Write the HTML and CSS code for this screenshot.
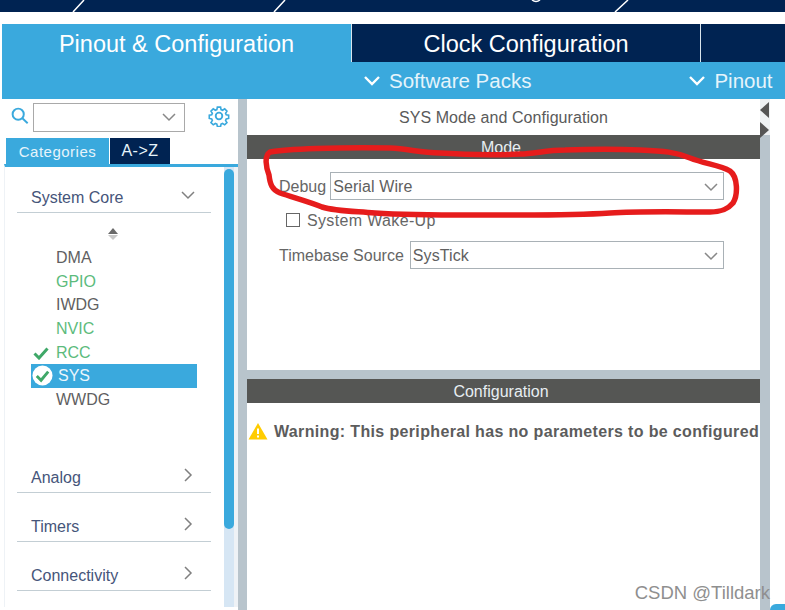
FILE: index.html
```html
<!DOCTYPE html>
<html lang="en">
<head>
    <meta charset="UTF-8">
    <title>Pinout &amp; Configuration</title>
    <link rel="stylesheet" href="styles.css">
</head>
<body>

    <!-- Cropped toolbar at the top -->
    <div class="top-strip">
        <svg width="785" height="12" viewBox="0 0 785 12">
            <path d="M73 12 L84 0 M274 12 L285 0 M615 12 L628 0" stroke="#fff" stroke-width="1.5" fill="none"/>
            <path d="M532 0 q4 3 8 0" stroke="#fff" stroke-width="1.5" fill="none"/>
        </svg>
    </div>

    <div class="tabs">
        <div class="tab tab-active">Pinout &amp; Configuration</div>
        <div class="tab tab-clock">Clock Configuration</div>
        <div class="tab tab-rest"></div>
    </div>

    <div class="subbar">
        <div class="subbar-item item-packs">
            <svg class="sub-chevron" viewBox="0 0 18 12"><path d="M2 2 L9 9 L16 2" /></svg>
            Software Packs
        </div>
        <div class="subbar-item item-pinout">
            <svg class="sub-chevron" viewBox="0 0 18 12"><path d="M2 2 L9 9 L16 2" /></svg>
            Pinout
        </div>
    </div>

    <div class="workspace">

        <!-- Left side: categories -->
        <div class="sidebar">
            <div class="search-row">
                <svg class="search-icon" viewBox="0 0 20 20"><circle cx="8" cy="8" r="6.2"/><path d="M12.6 12.6 L18.5 18"/></svg>
                <div class="search-box">
                    <svg class="select-chevron" viewBox="0 0 14 9"><path d="M1 1 L7 7 L13 1"/></svg>
                </div>
                <svg class="gear-icon" viewBox="0 0 24 24">
                    <path d="M10 2 h4 l.6 3 1.9.8 2.6-1.7 2.8 2.8-1.7 2.6.8 1.9 3 .6 v4 l-3 .6-.8 1.9 1.7 2.6-2.8 2.8-2.6-1.7-1.9.8-.6 3 h-4 l-.6-3-1.9-.8-2.6 1.7-2.8-2.8 1.7-2.6-.8-1.9-3-.6 v-4 l3-.6.8-1.9-1.7-2.6 2.8-2.8 2.6 1.7 1.9-.8 z" transform="translate(1.4 .6) scale(.88)"/>
                    <circle cx="12" cy="12" r="3.6"/>
                </svg>
            </div>

            <div class="side-tabs">
                <div class="side-tab side-tab-active">Categories</div>
                <div class="side-tab side-tab-az">A-&gt;Z</div>
            </div>

            <div class="side-body">
                <div class="side-list">
                    <div class="cat-head cat-first">
                        <span>System Core</span>
                        <svg class="cat-chevron" viewBox="0 0 14 9"><path d="M1 1 L7 7 L13 1"/></svg>
                    </div>

                    <div class="sort-arrows">
                        <span class="sort-up"></span>
                        <span class="sort-down"></span>
                    </div>

                    <div class="peripherals">
                        <div class="peri">DMA</div>
                        <div class="peri peri-green">GPIO</div>
                        <div class="peri">IWDG</div>
                        <div class="peri peri-green">NVIC</div>
                        <div class="peri peri-green">
                            <svg class="peri-check" viewBox="0 0 16 14"><path d="M1.5 7.5 L6 12 L14.5 2.5"/></svg>
                            RCC
                        </div>
                        <div class="peri peri-selected">
                            <svg class="peri-badge" viewBox="0 0 22 22">
                                <circle cx="11" cy="11" r="10.5"/>
                                <path d="M5 11.5 L9.5 16 L17 7"/>
                            </svg>
                            SYS
                        </div>
                        <div class="peri">WWDG</div>
                    </div>

                    <div class="cat-head cat-analog">
                        <span>Analog</span>
                        <svg class="cat-arrow" viewBox="0 0 9 14"><path d="M1 1 L7 7 L1 13"/></svg>
                    </div>
                    <div class="cat-head">
                        <span>Timers</span>
                        <svg class="cat-arrow" viewBox="0 0 9 14"><path d="M1 1 L7 7 L1 13"/></svg>
                    </div>
                    <div class="cat-head">
                        <span>Connectivity</span>
                        <svg class="cat-arrow" viewBox="0 0 9 14"><path d="M1 1 L7 7 L1 13"/></svg>
                    </div>
                </div>
                <div class="scroll-track">
                    <div class="scroll-thumb"></div>
                </div>
                <div class="side-edge"></div>
            </div>
        </div>

        <div class="divider"></div>

        <!-- Mode and configuration -->
        <div class="main">
            <div class="mode-pane">
                <div class="main-title">SYS Mode and Configuration</div>
                <div class="bar bar-mode">Mode</div>
                <div class="field-row row-debug">
                    <label class="field-label">Debug</label>
                    <div class="select-box box-debug">
                        Serial Wire
                        <svg class="select-chevron" viewBox="0 0 14 9"><path d="M1 1 L7 7 L13 1"/></svg>
                    </div>
                </div>
                <div class="check-row">
                    <span class="check-box"></span>
                    <span class="field-label check-label">System Wake-Up</span>
                </div>
                <div class="field-row row-timebase">
                    <label class="field-label">Timebase Source</label>
                    <div class="select-box box-timebase">
                        SysTick
                        <svg class="select-chevron" viewBox="0 0 14 9"><path d="M1 1 L7 7 L13 1"/></svg>
                    </div>
                </div>
            </div>
            <div class="pane-split"></div>
            <div class="config-pane">
                <div class="bar">Configuration</div>
                <div class="warning">
                    <svg class="warning-icon" viewBox="0 0 20 18">
                        <path d="M10 1 L19.5 17.5 H.5 Z"/>
                        <path class="warning-mark" d="M10 6.5 V12 M10 13.5 V15.5"/>
                    </svg>
                    <span>Warning: This peripheral has no parameters to be configured</span>
                </div>
            </div>
        </div>

        <div class="gutter">
            <div class="gutter-top">
                <span class="arrow-left"></span>
                <span class="arrow-right"></span>
            </div>
        </div>

        <div class="right-blank">
            <div class="corner-blue"></div>
        </div>
    </div>

    <!-- Red marker drawn over the screenshot -->
    <svg class="marker" width="785" height="610" viewBox="0 0 785 610">
        <path d="M270 152 C285 149 340 147 390 148 C410 149 420 153 440 153 C470 155 500 155 520 154 C535 154 545 150 565 150 C590 149 620 149 640 150 C665 151 675 152 690 158 C705 164 720 165 730 171 C738 177 738 195 733 203 C728 209 722 212 710 212 C680 212 640 211 610 213 C580 215 550 215 520 215 C470 215 420 216 375 213 C350 211 335 211 322 207 C310 202 295 198 280 193 C272 190 270 184 269 175 C266 167 264 156 270 152 Z"/>
    </svg>

    <div class="watermark">CSDN @Tilldark</div>

</body>
</html>
```

FILE: styles.css
```css
/* General Styles */
body {
    margin: 0;
    width: 785px;
    height: 610px;
    overflow: hidden;
    position: relative;
    background: #fff;
    font-family: 'Liberation Sans', 'Roboto', sans-serif;
    font-size: 16px;
    color: #5f5f62;
}

.top-strip {
    height: 12px;
    background: #002352;
}

.top-strip svg {
    display: block;
}

/* Main tabs */
.tabs {
    display: flex;
    height: 38px;
    margin: 12px 0 0 2px;
}

.tab {
    display: flex;
    align-items: center;
    justify-content: center;
    color: #fff;
    font-size: 23.5px;
    background: #002352;
    padding-top: 2px;
    box-sizing: border-box;
}

.tab-active {
    width: 349px;
    background: #3aa9dd;
}

.tab-clock {
    width: 349px;
    border-left: 1px solid #d8e4ec;
}

.tab-rest {
    flex: 1;
    border-left: 1px solid #d8e4ec;
}

.subbar {
    position: relative;
    display: flex;
    height: 37px;
    margin-left: 2px;
    background: #3aa9dd;
    color: #e6f4fb;
    font-size: 20.5px;
}

.subbar-item {
    display: flex;
    align-items: center;
    gap: 8px;
}

.item-packs {
    margin-left: 361px;
}

.item-pinout {
    margin-left: 157px;
}

.sub-chevron {
    width: 18px;
    height: 12px;
    fill: none;
    stroke: #fff;
    stroke-width: 2.4;
}

/* Workspace */
.workspace {
    display: flex;
    height: 511px;
}

.sidebar {
    width: 238px;
    flex: none;
}

.search-row {
    display: flex;
    align-items: center;
    height: 32px;
    margin-top: 2px;
    padding-left: 11px;
}

.search-icon {
    width: 18px;
    height: 18px;
    margin: -2px 4px 0 0;
    fill: none;
    stroke: #3aa9dd;
    stroke-width: 2.2;
}

.search-box {
    display: flex;
    align-items: center;
    justify-content: flex-end;
    width: 150px;
    height: 27px;
    border: 1px solid #a9a9a9;
}

.search-box .select-chevron {
    margin-right: 8px;
}

.gear-icon {
    width: 22px;
    height: 22px;
    margin: -3px 0 0 23px;
    fill: none;
    stroke: #3aa9dd;
    stroke-width: 2;
}

.side-tabs {
    display: flex;
    gap: 1px;
    height: 26px;
    margin-top: 5px;
    padding-left: 6px;
    box-sizing: border-box;
}

.side-tab {
    display: flex;
    align-items: center;
    justify-content: center;
    font-size: 15px;
    letter-spacing: .5px;
    color: #e6f4fb;
}

.side-tab-active {
    width: 103px;
    background: #3aa9dd;
}

.side-tab-az {
    width: 60px;
    background: #002352;
    font-size: 16px;
}

.side-body {
    display: flex;
    height: 443px;
    margin-left: 4px;
    border-top: 3px solid #3aa9dd;
    border-left: 1px solid #eef2f6;
    box-sizing: border-box;
}

.side-list {
    width: 219px;
    flex: none;
}

.cat-head {
    display: flex;
    justify-content: space-between;
    align-items: center;
    height: 30px;
    width: 194px;
    margin: 19px 0 0 12px;
    padding: 2px 16px 0 14px;
    box-sizing: border-box;
    border-bottom: 1px solid #c3ced4;
    color: #46557a;
}

.cat-first {
    margin-top: 16px;
    padding-top: 0;
}

.cat-analog {
    margin-top: 51px;
}

.cat-chevron {
    width: 14px;
    height: 9px;
    margin-top: -5px;
    fill: none;
    stroke: #808080;
    stroke-width: 1.5;
}

.cat-arrow {
    width: 9px;
    height: 14px;
    margin: -6px 2px 0 0;
    fill: none;
    stroke: #808080;
    stroke-width: 1.5;
}

.sort-arrows {
    display: flex;
    flex-direction: column;
    align-items: center;
    gap: 1px;
    height: 14px;
    margin: 15px 0 0 15px;
    width: 186px;
}

.sort-up {
    border: 5px solid transparent;
    border-top: 0;
    border-bottom: 6px solid #6a6a6a;
}

.sort-down {
    border: 5px solid transparent;
    border-bottom: 0;
    border-top: 5px solid #c8c8c8;
}

.peripherals {
    margin-top: 4px;
    padding-left: 26px;
}

.peri {
    position: relative;
    display: flex;
    align-items: center;
    height: 23.7px;
    padding-left: 25px;
    width: 141px;
}

.peri-green {
    color: #5cbb7c;
}

.peri-check {
    position: absolute;
    left: 2px;
    top: 5px;
    width: 16px;
    height: 14px;
    fill: none;
    stroke: #3fa868;
    stroke-width: 3;
}

.peri-selected {
    background: #3aa9dd;
    color: #eaf6fc;
    padding-left: 27px;
    width: 139px;
}

.peri-badge {
    position: absolute;
    left: 1px;
    top: 1px;
    width: 21px;
    height: 21px;
}

.peri-badge circle {
    fill: #fff;
}

.peri-badge path {
    fill: none;
    stroke: #3fa868;
    stroke-width: 3;
}

.scroll-track {
    width: 10px;
    flex: none;
    background: #d6e6f4;
}

.scroll-thumb {
    height: 360px;
    margin-top: 2px;
    border-radius: 5px;
    background: #3aa9dd;
}

.side-edge {
    flex: 1;
    background: #eef2f6;
}

.divider {
    width: 9px;
    flex: none;
    background: #b8c4cc;
}

/* Main panes */
.main {
    width: 513px;
    flex: none;
    display: flex;
    flex-direction: column;
}

.mode-pane {
    height: 271px;
    flex: none;
}

.main-title {
    height: 36px;
    line-height: 37px;
    text-align: center;
    color: #5a5a5a;
    letter-spacing: .07px;
}

.bar {
    height: 24px;
    line-height: 25px;
    text-align: center;
    background: #555654;
    color: #e8eef2;
    padding-right: 5px;
}

.field-row {
    display: flex;
    align-items: center;
    padding-left: 32px;
}

.row-debug {
    margin-top: 13px;
    gap: 4px;
}

.row-timebase {
    margin-top: 11px;
    gap: 6px;
}

.field-label {
    padding-top: 2px;
    color: #666;
}

.check-label {
    letter-spacing: .35px;
}

.select-box {
    display: flex;
    align-items: center;
    justify-content: space-between;
    height: 24px;
    padding: 2px 5px 0 2px;
    border: 1px solid #a9b1b6;
    color: #606060;
    letter-spacing: .1px;
}

.box-debug {
    width: 385px;
}

.box-timebase {
    width: 305px;
}

.select-chevron {
    width: 14px;
    height: 9px;
    fill: none;
    stroke: #888;
    stroke-width: 1.5;
}

.check-row {
    display: flex;
    align-items: center;
    gap: 7px;
    height: 20px;
    margin-top: 10px;
    padding-left: 39px;
}

.check-box {
    width: 12px;
    height: 12px;
    border: 1.5px solid #666;
    background: #fff;
}

.pane-split {
    height: 9px;
    flex: none;
    background: #b8c4cc;
}

.config-pane {
    flex: 1;
}

.warning {
    display: flex;
    align-items: center;
    gap: 6px;
    margin-top: 18px;
    padding-left: 1px;
    height: 22px;
    font-weight: 700;
    color: #5c5c5c;
    white-space: nowrap;
    letter-spacing: .35px;
}

.warning-icon {
    width: 20px;
    height: 18px;
    margin-top: -2px;
    flex: none;
    fill: #ffcc00;
}

.warning-mark {
    fill: none;
    stroke: #fff;
    stroke-width: 2;
}

/* Right gutter */
.gutter {
    width: 10px;
    flex: none;
    background: #b8c4cc;
}

.gutter-top {
    display: flex;
    flex-direction: column;
    gap: 4px;
    height: 36px;
    padding-top: 3px;
    box-sizing: border-box;
    background: #eef1f3;
}

.arrow-left {
    width: 0;
    border: 8px solid transparent;
    border-left: 0;
    border-right: 9px solid #555;
}

.arrow-right {
    width: 0;
    border: 8px solid transparent;
    border-right: 0;
    border-left: 9px solid #555;
}

.right-blank {
    flex: 1;
    position: relative;
}

.corner-blue {
    position: absolute;
    right: 0;
    bottom: 0;
    width: 15px;
    height: 6px;
    border-radius: 6px 0 0 0;
    background: #3aa9dd;
}

/* Things over the screenshot */
.marker {
    position: absolute;
    left: 0;
    top: 0;
}

.marker path {
    fill: none;
    stroke: #e61c1c;
    stroke-width: 5.5;
    stroke-linejoin: round;
}

.watermark {
    position: absolute;
    right: 15px;
    top: 582px;
    font-size: 18.5px;
    color: #8f8f8f;
    white-space: nowrap;
}
```
